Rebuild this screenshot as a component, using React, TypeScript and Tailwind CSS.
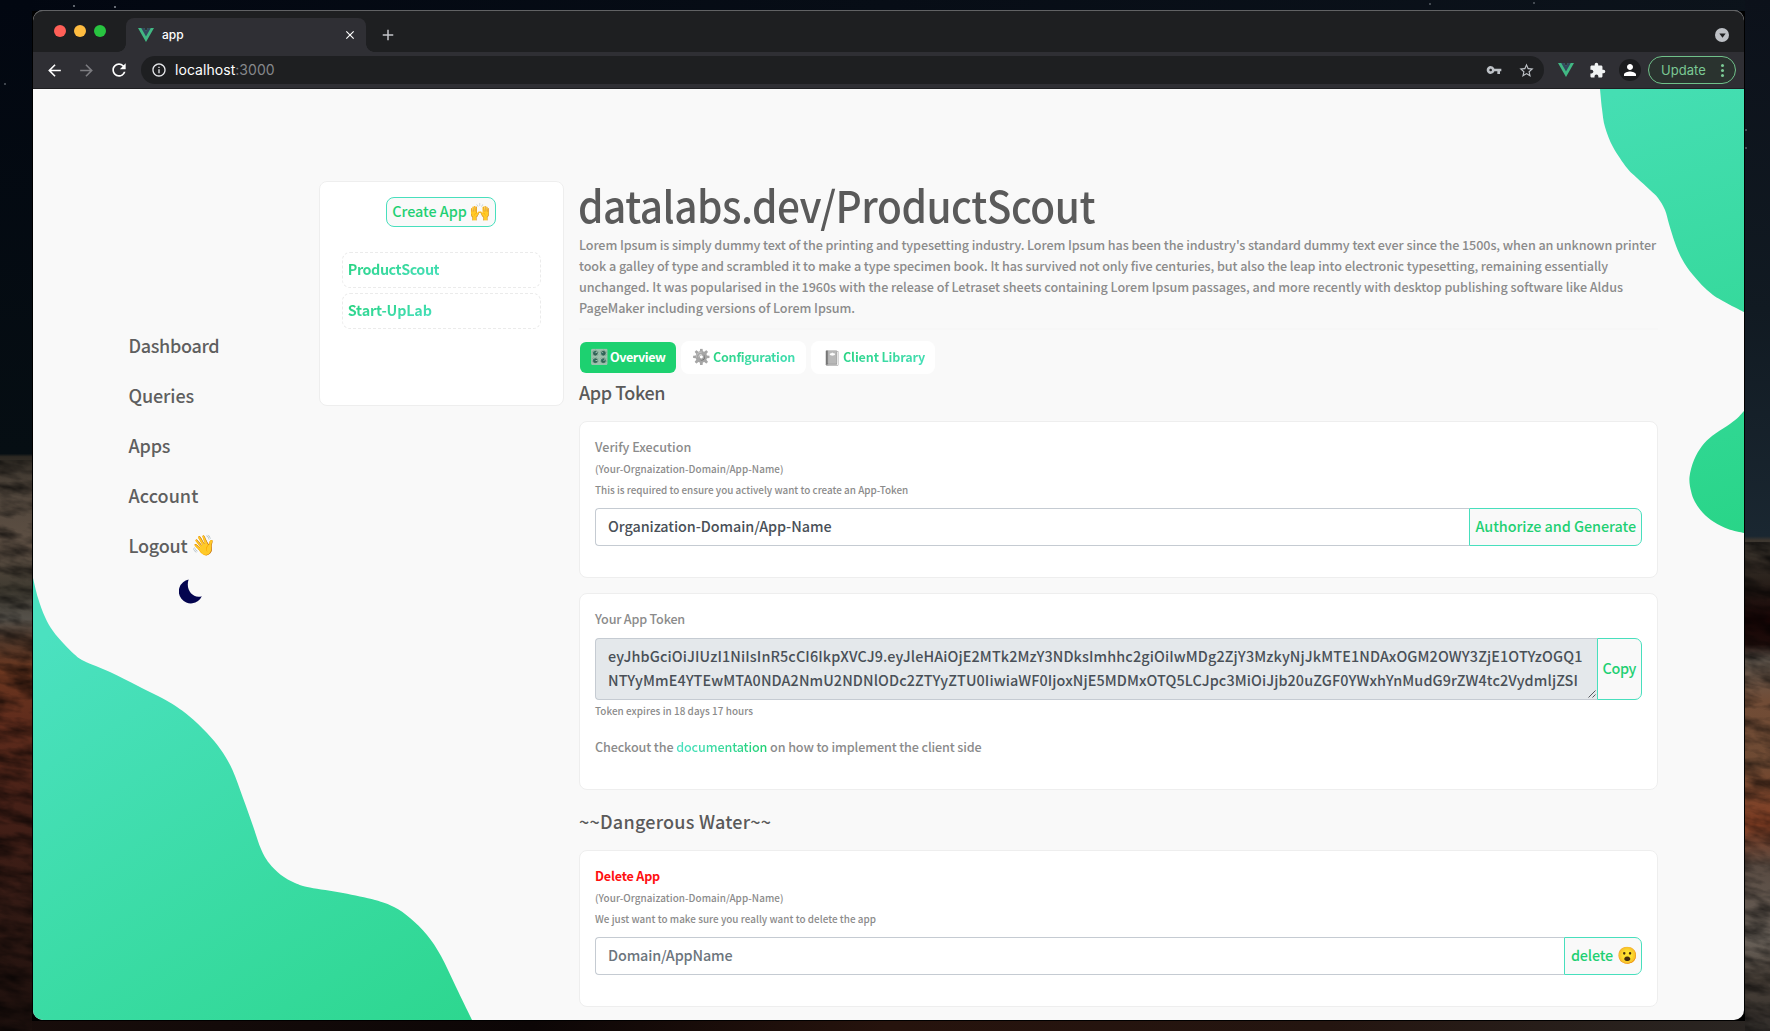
import type { ReactNode } from "react";
import { MdArrowBack, MdArrowForward, MdRefresh, MdVpnKey, MdStarBorder, MdExtension, MdPerson, MdClose, MdAdd, MdInfoOutline } from "react-icons/md";

type Pt = [number, number];

function curve(pts: Pt[]) {
  let d = `M${pts[0][0]} ${pts[0][1]}`;
  for (let i = 0; i < pts.length - 1; i++) {
    const a = pts[Math.max(i - 1, 0)];
    const b = pts[i];
    const c = pts[i + 1];
    const e = pts[Math.min(i + 2, pts.length - 1)];
    const k = 6;
    d += `C${b[0] + (c[0] - a[0]) / k} ${b[1] + (c[1] - a[1]) / k} ${c[0] - (e[0] - b[0]) / k} ${c[1] - (e[1] - b[1]) / k} ${c[0]} ${c[1]}`;
  }
  return d;
}

const leftBlob: Pt[] = [[0, 489], [5, 509], [12, 528], [20, 542], [31, 555], [41, 565], [51, 572], [77, 583], [105, 597], [136, 613], [156, 627], [174, 644], [188, 661], [199.5, 681], [210, 709], [220, 737], [228, 760], [236, 774], [248, 786], [262, 794], [277, 798.5], [310, 804], [342, 811], [361, 818], [377, 829], [394, 846], [408, 867], [423, 898], [439, 931]];
const topBlob: Pt[] = [[1567, 0], [1569, 20], [1572, 38], [1580, 58], [1594, 79], [1604, 89], [1617, 101], [1625, 109], [1632, 121], [1636, 135], [1642, 154], [1649, 170], [1660, 186], [1680, 206], [1711, 223]];
const sideBlob: Pt[] = [[1711, 322], [1704, 329.5], [1694, 337], [1679, 347], [1669, 357], [1661, 371], [1656.5, 388], [1658, 402], [1662, 413], [1670, 424], [1681, 433], [1695, 440], [1711, 444]];

function Blobs() {
  return (
    <svg className="pointer-events-none absolute inset-0" width="1711" height="931" viewBox="0 0 1711 931">
      <defs>
        <linearGradient id="gl" gradientUnits="userSpaceOnUse" x1="40" y1="530" x2="330" y2="1000">
          <stop offset="0" stopColor="#4be1c0" />
          <stop offset="1" stopColor="#2dd78f" />
        </linearGradient>
        <linearGradient id="gr" gradientUnits="userSpaceOnUse" x1="1600" y1="0" x2="1720" y2="440">
          <stop offset="0" stopColor="#45deb3" />
          <stop offset="1" stopColor="#29d588" />
        </linearGradient>
      </defs>
      <path d={`${curve(leftBlob)}L0 931Z`} fill="url(#gl)" />
      <path d={`${curve(topBlob)}L1711 0Z`} fill="url(#gr)" />
      <path d={`${curve(sideBlob)}Z`} fill="url(#gr)" />
    </svg>
  );
}

function Wallpaper() {
  return (
    <svg className="absolute inset-0" width="1770" height="1031" viewBox="0 0 1770 1031">
      <defs>
        <linearGradient id="wl" x1="0" y1="0" x2="0" y2="1">
          <stop offset="0" stopColor="#020711" />
          <stop offset="0.44" stopColor="#060e13" />
          <stop offset="0.443" stopColor="#2c2822" />
          <stop offset="0.47" stopColor="#4f453b" />
          <stop offset="0.53" stopColor="#5e5044" />
          <stop offset="0.57" stopColor="#403b31" />
          <stop offset="0.6" stopColor="#55514a" />
          <stop offset="0.62" stopColor="#50382a" />
          <stop offset="0.65" stopColor="#6a361f" />
          <stop offset="0.7" stopColor="#602c1c" />
          <stop offset="0.78" stopColor="#462017" />
          <stop offset="0.88" stopColor="#331a14" />
          <stop offset="1" stopColor="#1b0f0c" />
        </linearGradient>
        <linearGradient id="wr" x1="0" y1="0" x2="0" y2="1">
          <stop offset="0" stopColor="#0c111a" />
          <stop offset="0.3" stopColor="#111a22" />
          <stop offset="0.52" stopColor="#1a2731" />
          <stop offset="0.524" stopColor="#3d3730" />
          <stop offset="0.56" stopColor="#2b231d" />
          <stop offset="0.6" stopColor="#180505" />
          <stop offset="0.625" stopColor="#1d0c0a" />
          <stop offset="0.64" stopColor="#675d53" />
          <stop offset="0.68" stopColor="#714c36" />
          <stop offset="0.74" stopColor="#6e4a33" />
          <stop offset="0.8" stopColor="#853f24" />
          <stop offset="0.84" stopColor="#584a41" />
          <stop offset="0.91" stopColor="#6a625a" />
          <stop offset="0.95" stopColor="#4c433b" />
          <stop offset="1" stopColor="#2f2b28" />
        </linearGradient>
        <linearGradient id="wt" x1="0" y1="0" x2="1" y2="0">
          <stop offset="0" stopColor="#020711" />
          <stop offset="1" stopColor="#0c131b" />
        </linearGradient>
        <linearGradient id="wb" x1="0" y1="0" x2="1" y2="0">
          <stop offset="0" stopColor="#180d0b" />
          <stop offset="0.3" stopColor="#0c0606" />
          <stop offset="0.5" stopColor="#26130d" />
          <stop offset="0.75" stopColor="#241510" />
          <stop offset="1" stopColor="#2a2623" />
        </linearGradient>
        <filter id="grain" x="0" y="0" width="1" height="1">
          <feTurbulence type="fractalNoise" baseFrequency="0.03 0.09" numOctaves="4" seed="8" />
          <feColorMatrix values="0 0 0 0 0  0 0 0 0 0  0 0 0 0 0  1.3 0 0 0 -0.45" />
        </filter>
        <clipPath id="sides">
          <rect y="460" width="32" height="571" />
          <rect x="1745" y="542" width="25" height="489" />
        </clipPath>
      </defs>
      <rect width="1770" height="1031" fill="#000" />
      <rect width="1770" height="11" fill="url(#wt)" />
      <rect y="1021" width="1770" height="10" fill="url(#wb)" />
      <rect width="32" height="1031" fill="url(#wl)" />
      <rect x="1745" width="25" height="1031" fill="url(#wr)" />
      <g clipPath="url(#sides)">
        <rect x="-150" y="430" width="330" height="640" transform="rotate(10 16 740)" filter="url(#grain)" />
        <rect x="1600" y="500" width="330" height="580" transform="rotate(12 1757 780)" filter="url(#grain)" />
      </g>
      <g fill="#8b9199">
        <circle cx="74" cy="6" r="0.9" />
        <circle cx="115" cy="7" r="1" />
        <circle cx="5" cy="84" r="0.8" />
        <circle cx="1430" cy="4" r="0.8" />
        <circle cx="1534" cy="3" r="0.8" />
        <circle cx="1746" cy="130" r="0.8" />
        <circle cx="1746" cy="148" r="0.8" />
      </g>
    </svg>
  );
}

function VueLogo({ className }: { className?: string }) {
  return (
    <svg className={className} viewBox="0 0 261.76 226.69">
      <path fill="#41b883" d="M161.096.001l-30.225 52.351L100.647.001H-.005l130.877 226.688L261.749.001z" />
      <path fill="#34495e" d="M161.096.001l-30.225 52.351L100.647.001H52.346l78.526 136.01L209.398.001z" />
    </svg>
  );
}

function Chrome() {
  return (
    <div className="font-['Inter',sans-serif]">
      <div className="flex h-[42px] items-end bg-[#1e1f21]">
        <div className="flex h-full w-[93px] gap-2 pt-[15px] pl-[21px]">
          <span className="size-3 rounded-full bg-[#ff5f57]" />
          <span className="size-3 rounded-full bg-[#febc40]" />
          <span className="size-3 rounded-full bg-[#28c440]" />
        </div>
        <div className="relative flex h-[34px] w-[240px] items-center rounded-t-lg bg-[#2f2f34] pr-[9px] pl-3">
          <span className="absolute bottom-0 -left-2 size-2 bg-[radial-gradient(circle_at_0_0,transparent_7.5px,#2f2f34_8px)]" />
          <span className="absolute -right-2 bottom-0 size-2 bg-[radial-gradient(circle_at_100%_0,transparent_7.5px,#2f2f34_8px)]" />
          <VueLogo className="h-[14px] w-4" />
          <span className="ml-2 flex-1 text-[12px] font-medium text-white">app</span>
          <MdClose className="size-[14px] text-white" />
        </div>
        <MdAdd className="mb-[8px] ml-[13px] size-[18px] text-[#c4c5c9]" />
        <div className="mr-[15px] mb-[10px] ml-auto flex size-[14px] items-center justify-center rounded-full bg-[#bdc0c5]">
          <svg width="7" height="5" viewBox="0 0 7 5"><path d="M0.3 0.5h6.4L3.5 4.7z" fill="#1e1f21" /></svg>
        </div>
      </div>
      <div className="flex h-[37px] items-center border-b border-[#1f1f22] bg-[#2f2f34] pr-2 pl-3">
        <MdArrowBack className="size-[19px] text-white" />
        <MdArrowForward className="ml-[13px] size-[19px] text-[#7c7c80]" />
        <MdRefresh className="ml-[13px] size-5 text-white" />
        <div className="ml-3 flex h-7 w-[1403px] items-center rounded-full bg-[#1e1f21] pr-[9px] pl-[10px]">
          <MdInfoOutline className="size-4 text-[#e6e7ea]" />
          <span className="ml-2 flex-1 text-[14px] leading-[18px] tracking-[0.05px] text-white">
            localhost<span className="text-[#86888c]">:3000</span>
          </span>
          <MdVpnKey className="mr-[16px] size-[16px] text-[#bdc1c6]" />
          <MdStarBorder className="size-[17px] text-[#bdc1c6]" />
        </div>
        <VueLogo className="ml-[14px] h-[14px] w-4" />
        <MdExtension className="ml-[15px] size-[17px] text-[#f1f3f4]" />
        <span className="ml-[13px] flex size-[22px] items-center justify-center rounded-full bg-[#1b1c1e]">
          <MdPerson className="size-[18px] text-white" />
        </span>
        <div className="ml-[7px] flex h-7 w-[88px] items-center justify-between rounded-full border border-[#70c18a] bg-[#2a332f] pr-[11px] pl-[12px]">
          <span className="text-[13px] leading-[18px] tracking-[0.05px] text-[#7bc894]">Update</span>
          <span className="flex flex-col gap-[2px]">
            <i className="size-[3px] rounded-full bg-[#7bc894]" />
            <i className="size-[3px] rounded-full bg-[#7bc894]" />
            <i className="size-[3px] rounded-full bg-[#7bc894]" />
          </span>
        </div>
      </div>
    </div>
  );
}

function T({ className = "", children }: { className?: string; children: ReactNode }) {
  return <span className={`whitespace-pre ${className}`}>{children}</span>;
}

const nav: [string, string][] = [
  ["Dashboard", "tracking-[-0.32px]"],
  ["Queries", "tracking-[-0.11px]"],
  ["Apps", "tracking-[-0.2px]"],
  ["Account", "tracking-[0.05px]"],
];
const btn = "bg-[#f9f9f9] border border-[#48dfbd] text-[#1fd073]";
const grad = "bg-linear-to-br from-[#1fd073] to-[#4be1c3] bg-clip-text text-transparent";
const note = "relative top-[1.5px] text-[9.9px] leading-[21px]";
const label = "text-[12.6px] leading-[21px]";

function Card({ className = "", children }: { className?: string; children: ReactNode }) {
  return <section className={`rounded-lg border border-[#eeeeee] bg-white px-[15px] pt-[14px] text-[#8b8b8b] ${className}`}>{children}</section>;
}

function Field({ value, muted, action }: { value: ReactNode; muted?: boolean; action: ReactNode }) {
  return (
    <div className="mt-[9px] flex h-[38px] text-[14.4px] leading-[34px]">
      <div className={`flex-1 rounded-l border border-r-0 border-[#c5cbd2] pl-3 ${muted ? "text-[#6c757d]" : "text-[#495057]"}`}>{value}</div>
      <div className={`rounded-r-[7px] pr-[5px] pl-[5.5px] ${btn}`}>{action}</div>
    </div>
  );
}

export default function App() {
  return (
    <div className="relative h-[1031px] w-[1770px] overflow-hidden">
      <Wallpaper />
      <div className="relative mt-[10px] ml-[33px] h-[1010px] w-[1711px] overflow-hidden rounded-[10px] bg-[#f9f9f9]">
        <Chrome />
        <div className="relative flex h-[931px] font-['Noto_Sans_CJK_SC',sans-serif] font-medium">
          <Blobs />
          <nav className="relative flex w-[286px] flex-col pt-[241px] pl-[95.5px] text-[18px] leading-[30px] text-[#5f5f5f]">
            {nav.map(([name, tracking]) => (
              <a key={name} className="mb-5"><T className={tracking}>{name}</T></a>
            ))}
            <a className="flex h-[30px]"><T className="tracking-[-0.25px]">Logout</T><span className="relative -top-px ml-[4px] text-[20px]">👋</span></a>
            <svg className="mt-[18px] ml-[50px]" width="24" height="26" viewBox="0 0 24 26">
              <path d="M9.6 1.6A12 12 0 1 0 22.8 18.2 C14 21 6.2 12 9.6 1.6Z" fill="#04054f" />
            </svg>
          </nav>
          <aside className="relative mt-[92px] h-[225px] w-[244.5px] rounded-lg border border-[#eeeeee] bg-white pt-[15px]">
            <button className={`mx-auto flex h-[30px] w-[110px] items-center rounded-lg pl-[5px] text-[14.4px] leading-[26px] ${btn}`}>
              <T className="relative -top-px tracking-[-0.04px]">Create App</T><span className="relative -top-px ml-[2px] text-[17.5px]">🙌</span>
            </button>
            <div className="mx-auto mt-[25px] flex w-[199px] flex-col gap-[5px] text-[14.4px] font-bold">
              <div className="h-9 rounded-lg border border-dashed border-[#ebebeb] pl-[5px] leading-[31px]"><T className={`tracking-[-0.46px] ${grad}`}>ProductScout</T></div>
              <div className="h-9 rounded-lg border border-dashed border-[#ebebeb] pl-[5px] leading-[31px]"><T className={`tracking-[-0.18px] ${grad}`}>Start-UpLab</T></div>
            </div>
          </aside>
          <main className="relative ml-[15.5px] w-[1079px] pt-[92px]">
            <h1 className="h-12 text-[43.2px] leading-[46px] text-[#5a5a5a]"><T className="-ml-px inline-block origin-left scale-x-[0.938] tracking-[-0.5px]">datalabs.dev/ProductScout</T></h1>
            <p className="mt-[5px] text-[12.6px] leading-[21px] text-[#8b8b8b]">
              <T className="tracking-[-0.085px]">Lorem Ipsum is simply dummy text of the printing and typesetting industry. Lorem Ipsum has been the industry's standard dummy text ever since the 1500s, when an unknown printer</T><br />
              <T className="tracking-[-0.074px]">took a galley of type and scrambled it to make a type specimen book. It has survived not only five centuries, but also the leap into electronic typesetting, remaining essentially</T><br />
              <T className="tracking-[-0.043px]">unchanged. It was popularised in the 1960s with the release of Letraset sheets containing Lorem Ipsum passages, and more recently with desktop publishing software like Aldus</T><br />
              <T className="tracking-[-0.06px]">PageMaker including versions of Lorem Ipsum.</T>
            </p>
            <hr className="mt-[10px] h-[2px] border-0 bg-[#f7f7f7]" />
            <div className="mt-[11px] flex h-[33px] items-center text-[12.6px] font-bold">
              <button className="mx-px flex h-[31px] w-[96px] items-center rounded-md bg-[#1dd170] pl-2 text-white"><span className="relative -top-px w-[22px] text-[15px] opacity-80">🎛️</span><T className="tracking-[-0.45px]">Overview</T></button>
              <button className="ml-1 flex h-[33px] w-[125px] items-center rounded-lg bg-white pl-2"><span className="relative -top-px w-6 text-[15px] grayscale">⚙️</span><T className={`tracking-[-0.28px] ${grad}`}>Configuration</T></button>
              <button className="ml-[5px] flex h-[33px] w-[124px] items-center rounded-lg bg-white pl-[9px]"><span className="relative -top-px w-[23px] text-[14.5px] grayscale">📔</span><T className={`tracking-[-0.16px] ${grad}`}>Client Library</T></button>
            </div>
            <h2 className="mt-[3px] mb-[14px] text-[18px] leading-[30px] text-[#5a5a5a]"><T className="tracking-[-0.44px]">App Token</T></h2>
            <Card className="h-[157px]">
              <div className={label}><T>Verify Execution</T></div>
              <div className={note}><T className="tracking-[0.064px]">(Your-Orgnaization-Domain/App-Name)</T></div>
              <div className={note}><T>This is required to ensure you actively want to create an App-Token</T></div>
              <Field value={<T className="tracking-[-0.065px]">Organization-Domain/App-Name</T>} action={<T className="tracking-[-0.05px]">Authorize and Generate</T>} />
            </Card>
            <Card className="mt-[15px] h-[197px]">
              <div className={label}><T className="tracking-[-0.2px]">Your App Token</T></div>
              <div className="mt-[9px] flex h-[62px] text-[14.4px] leading-6 text-[#495057]">
                <div className="relative flex-1 overflow-hidden rounded-l border border-r-0 border-[#c5cbd2] bg-[#e4e8eb] pt-[5px] pl-3">
                  <T className="tracking-[0.114px]">eyJhbGciOiJIUzI1NiIsInR5cCI6IkpXVCJ9.eyJleHAiOjE2MTk2MzY3NDksImhhc2giOiIwMDg2ZjY3MzkyNjJkMTE1NDAxOGM2OWY3ZjE1OTYzOGQ1</T><br />
                  <T className="tracking-[0.098px]">NTYyMmE4YTEwMTA0NDA2NmU2NDNlODc2ZTYyZTU0IiwiaWF0IjoxNjE5MDMxOTQ5LCJpc3MiOiJjb20uZGF0YWxhYnMudG9rZW4tc2VydmljZSI</T>
                  <svg className="absolute right-0 bottom-0" width="10" height="10" viewBox="0 0 10 10"><path d="M1.5 8.5l7-7M5.5 8.5l3-3" stroke="#55595e" strokeWidth="1" /></svg>
                </div>
                <div className={`rounded-r-[7px] pr-[5px] pl-1 leading-[58px] ${btn}`}><T className="tracking-[-0.36px]">Copy</T></div>
              </div>
              <div className="mt-px text-[9.9px] leading-[21px]"><T className="tracking-[0.047px]">Token expires in 18 days 17 hours</T></div>
              <div className="mt-[14px] text-[12.6px] leading-[21px]"><T className="tracking-[-0.12px]">Checkout the <span className="bg-linear-to-r from-[#4be1c3] to-[#1fd073] bg-clip-text text-transparent">documentation</span> on how to implement the client side</T></div>
            </Card>
            <h2 className="mt-4 mb-[14px] text-[18px] leading-[30px] text-[#5a5a5a]"><T className="tracking-[0.24px]">~~Dangerous Water~~</T></h2>
            <Card className="h-[157px]">
              <div className={`font-bold text-[#ff1010] ${label}`}><T className="tracking-[-0.2px]">Delete App</T></div>
              <div className={note}><T className="tracking-[0.064px]">(Your-Orgnaization-Domain/App-Name)</T></div>
              <div className={note}><T className="tracking-[0.028px]">We just want to make sure you really want to delete the app</T></div>
              <Field muted value={<T className="tracking-[-0.14px]">Domain/AppName</T>} action={<div className="flex"><T className="tracking-[-0.18px]">delete</T><span className="relative -top-px -mr-0.5 ml-1 text-[16.5px]">😮</span></div>} />
            </Card>
          </main>
        </div>
        <div className="pointer-events-none absolute inset-0 rounded-[10px] shadow-[inset_0_1px_0_rgba(255,255,255,0.3)]" />
      </div>
    </div>
  );
}
